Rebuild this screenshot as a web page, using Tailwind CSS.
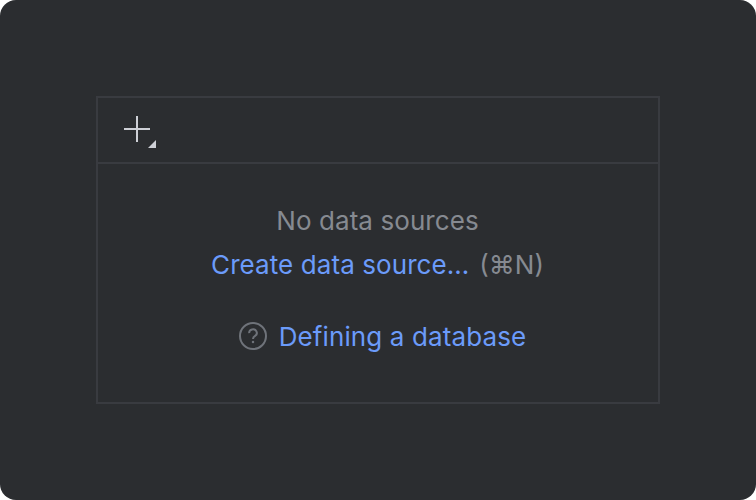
<!DOCTYPE html>
<html lang="en">
<head>
<meta charset="utf-8">
<title>Database</title>
<script src="https://cdn.jsdelivr.net/npm/@tailwindcss/browser@4"></script>
</head>
<body class="bg-white">
<main class="w-[756px] h-[500px] rounded-[16px] bg-[#2b2d30] flex items-center justify-center font-['Inter',sans-serif] font-[425] tracking-[0.08px] text-[26px] leading-[44px] text-[#868a91]">
  <section class="w-[564px] h-[308px] border-2 border-[#393b40] flex flex-col">
    <header class="h-[66px] shrink-0 border-b-2 border-[#393b40] pl-[24px] flex items-center">
      <button aria-label="Add" class="block">
        <svg class="block" width="36" height="40" viewBox="0 0 36 40" fill="none"><path d="M15 6v26M2 19h26" stroke="#ced0d6" stroke-width="2"/><path d="M34 30v8h-8z" fill="#ced0d6"/></svg>
      </button>
    </header>
    <div class="flex flex-col items-center pt-[35px] whitespace-nowrap">
      <p class="pr-px">No data sources</p>
      <p class="flex gap-[10px] pr-px"><a class="text-[#6b9bfa]">Create data source…</a><span class="tracking-normal">(⌘N)</span></p>
      <p class="flex items-center gap-[12px] mt-[28px] pl-[9px]">
        <svg class="mb-[2px]" width="28" height="28" viewBox="0 0 28 28" fill="none" stroke="#6f737a" stroke-width="2"><circle cx="14" cy="14" r="13"/><path d="M10.2 11.2a3.8 3.6 0 1 1 5.9 2.7c-1.3.8-2.1 1.3-2.1 3"/><circle cx="14" cy="20" r="1.25" fill="#6f737a" stroke="none"/></svg>
        <a class="text-[#6b9bfa] tracking-[0.12px]">Defining a database</a>
      </p>
    </div>
  </section>
</main>
</body>
</html>
